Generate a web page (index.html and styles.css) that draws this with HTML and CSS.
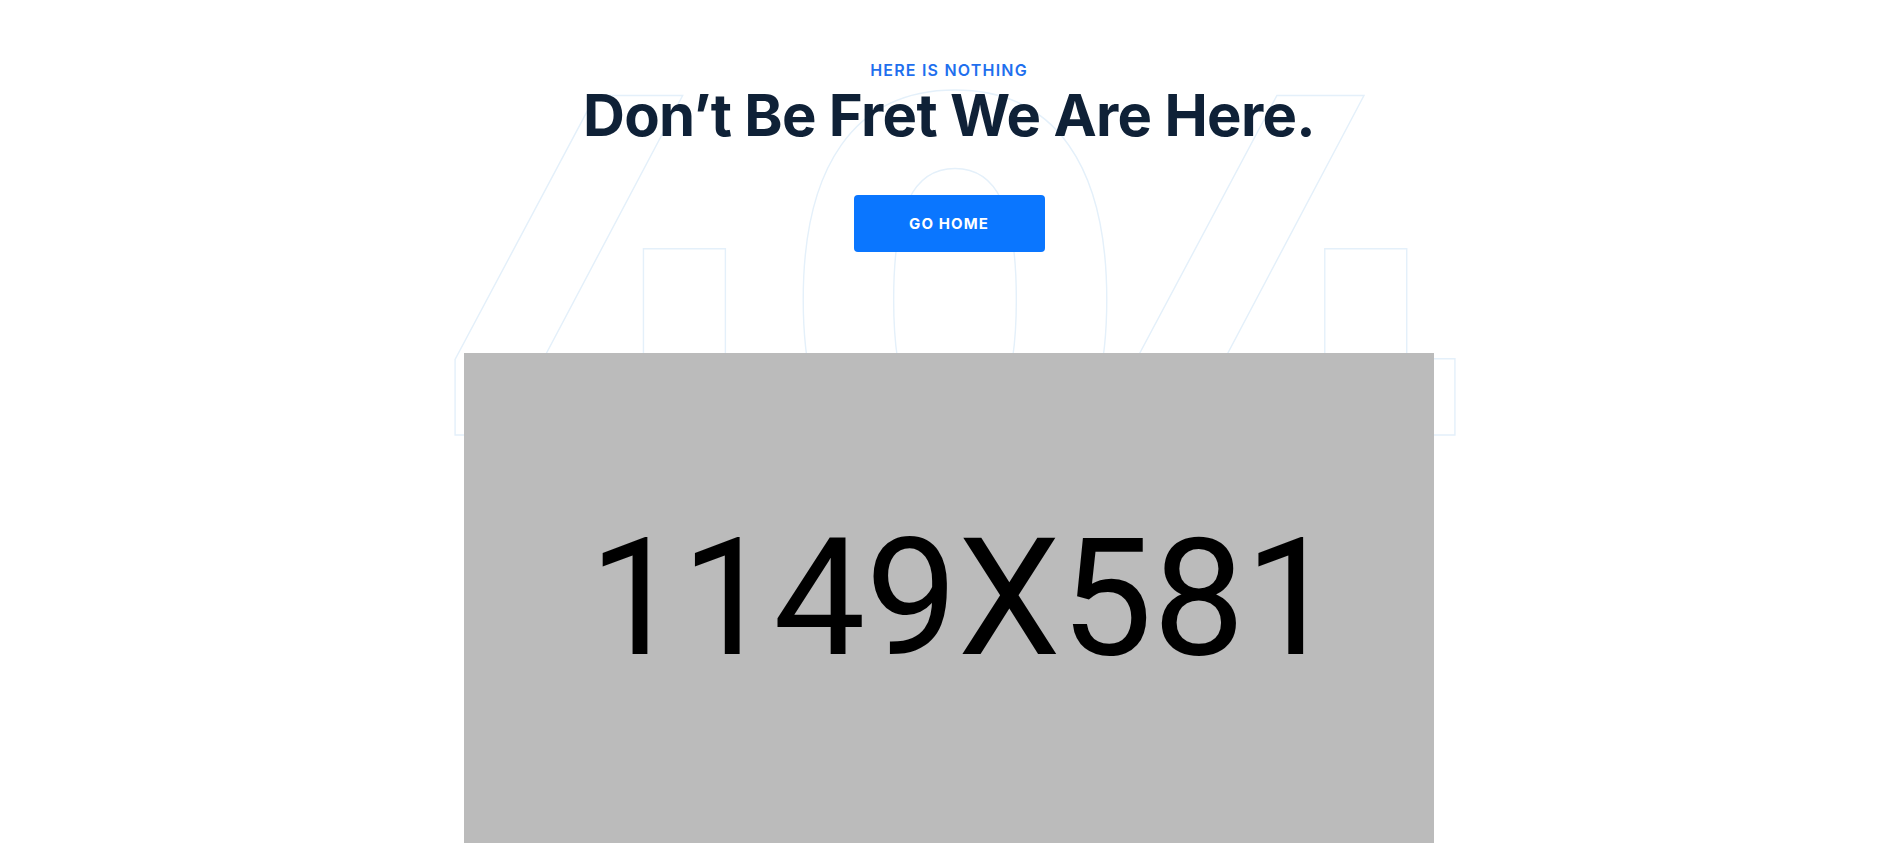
FILE: index.html
```html
<!DOCTYPE html>
<html lang="en">
<head>
<meta charset="utf-8">
<title>404 - Here Is Nothing</title>
<link rel="stylesheet" href="styles.css">
</head>
<body>
<main class="stage">
  <svg class="bg-404" width="1060" height="560" viewBox="0 0 1060 560" aria-hidden="true">
    <text x="4" y="423" textLength="1022" lengthAdjust="spacingAndGlyphs">404</text>
  </svg>
  <section class="hero">
    <p class="label">HERE IS NOTHING</p>
    <h1 class="title">Don’t Be Fret We Are Here.</h1>
    <a class="btn" href="#">GO HOME</a>
    <div class="placeholder">1149X581</div>
  </section>
</main>
</body>
</html>
```

FILE: styles.css
```css
* { box-sizing: border-box; }

html, body {
  margin: 0;
  padding: 0;
  background: #ffffff;
}

body {
  width: 1898px;
  height: 864px;
  overflow: hidden;
  font-family: "Inter", "Liberation Sans", sans-serif;
}

.stage {
  position: relative;
  width: 100%;
  height: 864px;
}

.bg-404 {
  position: absolute;
  left: 440px;
  top: 80px;
  z-index: 0;
  overflow: visible;
}

.bg-404 text {
  font-family: "Inter", "Liberation Sans", sans-serif;
  font-feature-settings: "cv02" 1, "tnum" 1;
  font-weight: 800;
  font-size: 560px;
  fill: none;
  stroke: #e4f0fa;
  stroke-width: 1.5;
}

.hero {
  position: relative;
  z-index: 1;
  display: flex;
  flex-direction: column;
  align-items: center;
  padding-top: 61px;
}

.label {
  margin: 0;
  font-size: 16px;
  line-height: 19px;
  font-weight: 600;
  letter-spacing: 1.2px;
  color: #1f6fee;
}

.title {
  margin: 0;
  font-size: 58px;
  line-height: 70px;
  font-weight: 700;
  letter-spacing: -0.7px;
  color: #0f2137;
}

.btn {
  margin-top: 45px;
  display: flex;
  align-items: center;
  justify-content: center;
  width: 191px;
  height: 57px;
  border-radius: 4px;
  background: #0a76ff;
  color: #ffffff;
  text-decoration: none;
  font-size: 15px;
  font-weight: 700;
  letter-spacing: 1.1px;
}

.placeholder {
  margin-top: 101px;
  width: 970px;
  height: 490px;
  padding-left: 28px;
  background: #bbbbbb;
  display: flex;
  align-items: center;
  justify-content: center;
  font-family: "Roboto", "Liberation Sans", sans-serif;
  font-size: 164px;
  font-weight: 400;
  color: #000000;
}
```
